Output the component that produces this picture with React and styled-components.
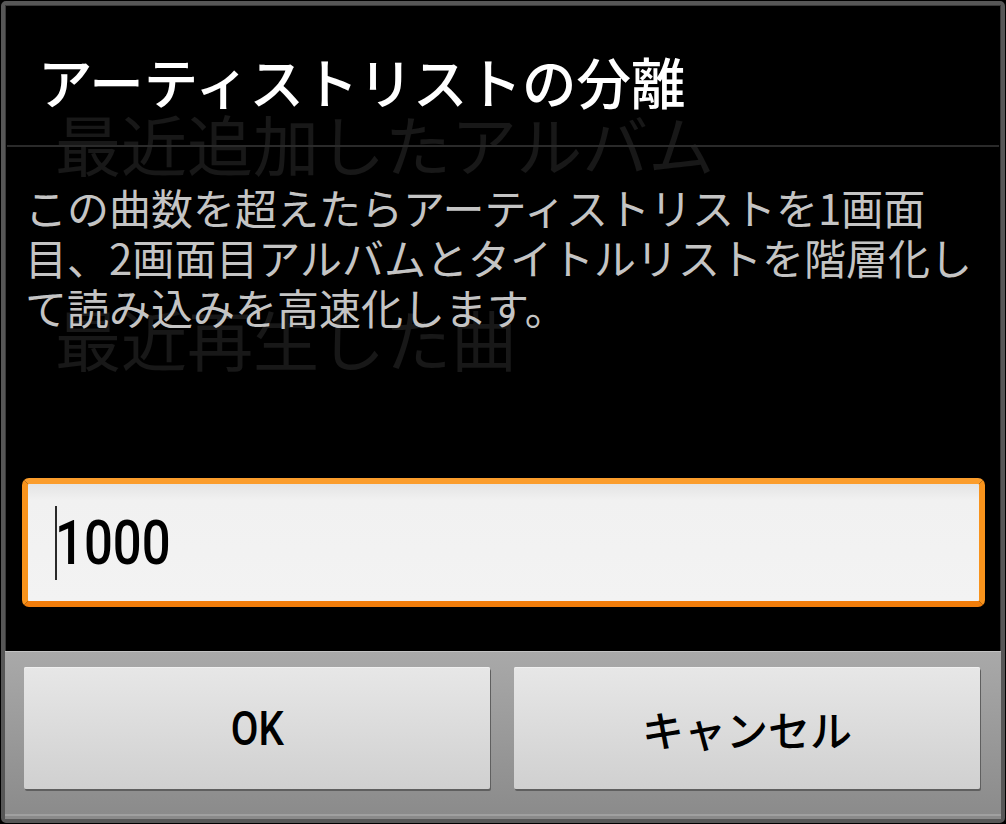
import React from 'react';
import styled, { createGlobalStyle } from 'styled-components';

const GlobalStyle = createGlobalStyle`
  html, body {
    margin: 0;
    padding: 0;
    background: #000;
  }
  body {
    font-family: "Noto Sans CJK JP", "Noto Sans", sans-serif;
  }
`;

const Screen = styled.div`
  width: 1006px;
  height: 824px;
  padding: 1px;
  box-sizing: border-box;
  background: #000;
`;

const Dialog = styled.div`
  position: relative;
  height: 100%;
  box-sizing: border-box;
  border: 4px solid #575757;
  border-radius: 5px;
  background: #000;
  display: flex;
  flex-direction: column;
  overflow: hidden;
  box-shadow: inset 0 0 0 1px #3a3a3a;
`;

const Ghosts = styled.div`
  position: absolute;
  left: 50px;
  top: 104px;
  display: flex;
  flex-direction: column;
  gap: 129px;
  pointer-events: none;
`;

const Ghost = styled.div`
  font-size: 66px;
  line-height: 66px;
  color: #181818;
  white-space: nowrap;
`;

const Title = styled.h1`
  position: relative;
  margin: 0;
  height: 140px;
  padding: 10px 0 0 33px;
  box-sizing: border-box;
  display: flex;
  align-items: center;
  font-size: 54.5px;
  font-weight: 500;
  color: #fff;
  white-space: nowrap;
`;

const Divider = styled.div`
  position: relative;
  height: 2px;
  margin: 0 2px;
  background: #2a2a2a;
`;

const Message = styled.p`
  position: relative;
  margin: 35px 0 0 20px;
  font-size: 42px;
  line-height: 50px;
  color: #c4c4c4;
  white-space: nowrap;
`;

const Field = styled.div`
  position: relative;
  margin: 146px 16px 0 17px;
  height: 129px;
  box-sizing: border-box;
  border: 6px solid #f8931c;
  border-top-color: #fb9d2c;
  border-bottom-color: #f17d0b;
  border-radius: 7px;
  background: linear-gradient(#e4e4e4, #f1f1f1 14%, #f3f3f3);
  display: flex;
  align-items: center;
  padding-left: 27px;
`;

const Caret = styled.span`
  width: 2px;
  height: 74px;
  background: #2a2a2a;
`;

const Latin = styled.span`
  display: inline-block;
  font-family: Roboto, "Noto Sans", sans-serif;
  font-size: ${(p) => p.size}px;
  font-weight: ${(p) => p.weight || 400};
  margin-left: ${(p) => p.shift || 0}px;
  transform: scaleX(0.82);
  transform-origin: ${(p) => p.origin || 'center'};
  color: #000;
`;

const ButtonBar = styled.div`
  position: relative;
  margin-top: 44px;
  flex: 1;
  display: flex;
  gap: 24px;
  padding: 15px 21px 27px 19px;
  background: linear-gradient(#a9a9a9, #8a8a8a);
  border-top: 1px solid #c2c2c2;
  box-shadow: inset 0 -3px 0 #8a8a8a, inset 0 -5px 0 #a0a0a0;
`;

const Button = styled.button`
  flex: 1;
  height: 122px;
  border: none;
  border-radius: 2px;
  background: linear-gradient(#e7e7e7, #d0d0d0);
  box-shadow: 1px 2px 0 #5f5f5f, inset 0 1px 0 #f0f0f0;
  display: flex;
  align-items: center;
  justify-content: center;
  font-family: "Noto Sans CJK JP", sans-serif;
  font-size: 42px;
  font-weight: 500;
  color: #000;
  padding: 0;
`;

export default function App() {
  return (
    <>
      <GlobalStyle />
      <Screen>
        <Dialog>
          <Ghosts>
            <Ghost>最近追加したアルバム</Ghost>
            <Ghost>最近再生した曲</Ghost>
          </Ghosts>
          <Title>アーティストリストの分離</Title>
          <Divider />
          <Message>
            この曲数を超えたらアーティストリストを1画面
            <br />
            目、2画面目アルバムとタイトルリストを階層化し
            <br />
            て読み込みを高速化します。
          </Message>
          <Field>
            <Caret />
            <Latin size={62} weight={500} origin="left" shift={-2}>1000</Latin>
          </Field>
          <ButtonBar>
            <Button>
              <Latin size={49} weight={500}>OK</Latin>
            </Button>
            <Button>キャンセル</Button>
          </ButtonBar>
        </Dialog>
      </Screen>
    </>
  );
}
